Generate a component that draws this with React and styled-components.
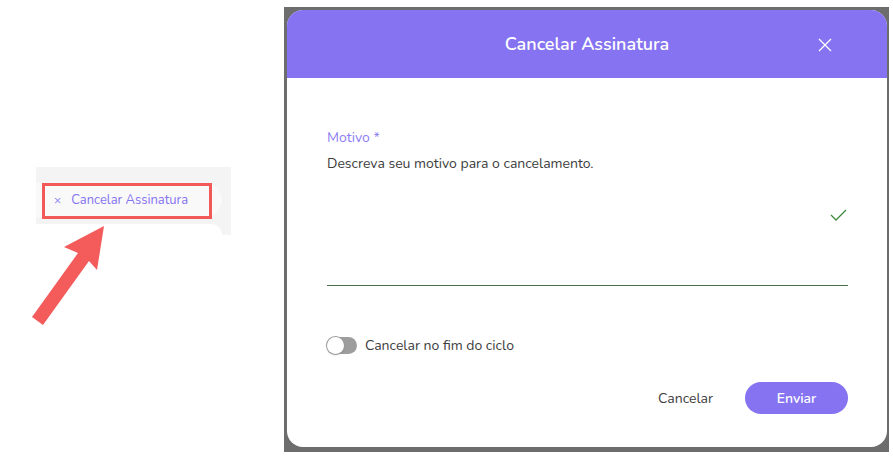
import styled, { createGlobalStyle } from 'styled-components';

const purple = '#8573f2';

const Global = createGlobalStyle`
  html, body {
    margin: 0;
    padding: 0;
    background: #ffffff;
  }
  body {
    font-family: 'Nunito', 'Lato', 'Open Sans', sans-serif;
  }
`;

const Page = styled.div`
  position: relative;
  width: 893px;
  height: 461px;
  display: flex;
  align-items: flex-start;
  overflow: hidden;
`;

/* left side: cropped snippet of the menu with annotation */
const Snippet = styled.div`
  width: 284px;
  flex-shrink: 0;
  padding: 167px 0 0 36px;
  box-sizing: border-box;
`;

const MenuPanel = styled.div`
  position: relative;
  width: 195px;
  height: 68px;
  background: #f4f4f4;
  padding-top: 16px;
  box-sizing: border-box;
  display: flex;
  flex-direction: column;
  gap: 7px;
`;

const MenuItem = styled.div`
  width: 186px;
  height: 34px;
  background: #f9f9f9;
  border-radius: 0 17px 17px 0;
  display: flex;
  align-items: center;
  gap: 10px;
  padding-left: 18px;
  box-sizing: border-box;
  color: ${purple};
  font-size: 13px;
`;

const MenuIcon = styled.span`
  font-size: 12px;
  line-height: 1;
`;

const NextItem = styled.div`
  width: 186px;
  flex: 1;
  background: #ffffff;
  border-radius: 0 14px 0 0;
`;

const Highlight = styled.div`
  position: absolute;
  left: 6px;
  top: 16px;
  width: 170px;
  height: 36px;
  border: 3px solid #f25a5a;
  box-sizing: border-box;
`;

const Arrow = styled.svg`
  position: absolute;
  left: 0;
  top: 0;
  pointer-events: none;
`;

/* right side: dialog screenshot */
const Frame = styled.div`
  margin-top: 7px;
  width: 605px;
  height: 445px;
  background: #6d6d6d;
  padding: 3px 2px 5px 3px;
  box-sizing: border-box;
`;

const Dialog = styled.div`
  width: 600px;
  height: 437px;
  background: #ffffff;
  border-radius: 16px;
  overflow: hidden;
  display: flex;
  flex-direction: column;
`;

const Header = styled.div`
  height: 69px;
  background: ${purple};
  display: flex;
  align-items: center;
  justify-content: center;
  position: relative;
  color: #ffffff;
`;

const Title = styled.h2`
  margin: 0;
  font-size: 18px;
  font-weight: 600;
`;

const CloseButton = styled.button`
  position: absolute;
  right: 55px;
  top: 28px;
  width: 14px;
  height: 14px;
  padding: 0;
  border: none;
  background: none;
  display: flex;
`;

const Body = styled.div`
  flex: 1;
  padding: 51px 39px 33px 40px;
  display: flex;
  flex-direction: column;
`;

const Label = styled.label`
  font-size: 14px;
  line-height: 18px;
  color: #8d7ef5;
`;

const Field = styled.div`
  margin-top: 7px;
  height: 131px;
  border-bottom: 1px solid #4b6e4b;
  display: flex;
  justify-content: space-between;
  align-items: flex-start;
`;

const FieldText = styled.div`
  font-size: 14px;
  line-height: 20px;
  color: #3d3d3d;
`;

const Check = styled.svg`
  margin-top: 55px;
  margin-right: 1px;
`;

const ToggleRow = styled.div`
  margin-top: 49px;
  display: flex;
  align-items: center;
  gap: 8px;
  height: 20px;
  font-size: 14px;
  color: #3d3d3d;
`;

const Track = styled.span`
  position: relative;
  width: 30px;
  height: 17px;
  border-radius: 9px;
  background: #9d9d9d;
  display: inline-block;
`;

const Knob = styled.span`
  position: absolute;
  left: 0;
  top: 0;
  width: 17px;
  height: 17px;
  border-radius: 50%;
  background: #ffffff;
  box-shadow: 0 0 0 1px #9a9a9a, 0 1px 2px rgba(0, 0, 0, 0.25);
  box-sizing: border-box;
`;

const Footer = styled.div`
  margin-top: 27px;
  display: flex;
  justify-content: flex-end;
  align-items: center;
  gap: 32px;
`;

const Button = styled.button`
  font-family: inherit;
  font-size: 14px;
  height: 32px;
  border: none;
  cursor: pointer;
  padding: 0;
  background: ${(p) => (p.$primary ? purple : 'transparent')};
  color: ${(p) => (p.$primary ? '#ffffff' : '#3d3d3d')};
  font-weight: ${(p) => (p.$primary ? 600 : 400)};
  width: ${(p) => (p.$primary ? '103px' : 'auto')};
  border-radius: 16px;
`;

export default function App() {
  return (
    <Page>
      <Global />
      <Snippet>
        <MenuPanel>
          <MenuItem>
            <MenuIcon>×</MenuIcon>
            <span>Cancelar Assinatura</span>
          </MenuItem>
          <NextItem />
          <Highlight />
        </MenuPanel>
      </Snippet>
      <Arrow width="284" height="461" viewBox="0 0 284 461">
        <polygon
          points="104,226 97,270 89,261 43,325 32,317 78,253 64,247"
          fill="#f45b5b"
        />
      </Arrow>
      <Frame>
        <Dialog>
          <Header>
            <Title>Cancelar Assinatura</Title>
            <CloseButton aria-label="Fechar">
              <svg width="14" height="14" viewBox="0 0 14 14">
                <path d="M1 1 L13 13 M13 1 L1 13" stroke="#ffffff" strokeWidth="1.3" />
              </svg>
            </CloseButton>
          </Header>
          <Body>
            <Label>Motivo *</Label>
            <Field>
              <FieldText>Descreva seu motivo para o cancelamento.</FieldText>
              <Check width="17" height="12" viewBox="0 0 17 12">
                <path d="M1 6 L6 11 L16 1" fill="none" stroke="#3f8a3f" strokeWidth="1.3" />
              </Check>
            </Field>
            <ToggleRow>
              <Track>
                <Knob />
              </Track>
              <span>Cancelar no fim do ciclo</span>
            </ToggleRow>
            <Footer>
              <Button>Cancelar</Button>
              <Button $primary>Enviar</Button>
            </Footer>
          </Body>
        </Dialog>
      </Frame>
    </Page>
  );
}
